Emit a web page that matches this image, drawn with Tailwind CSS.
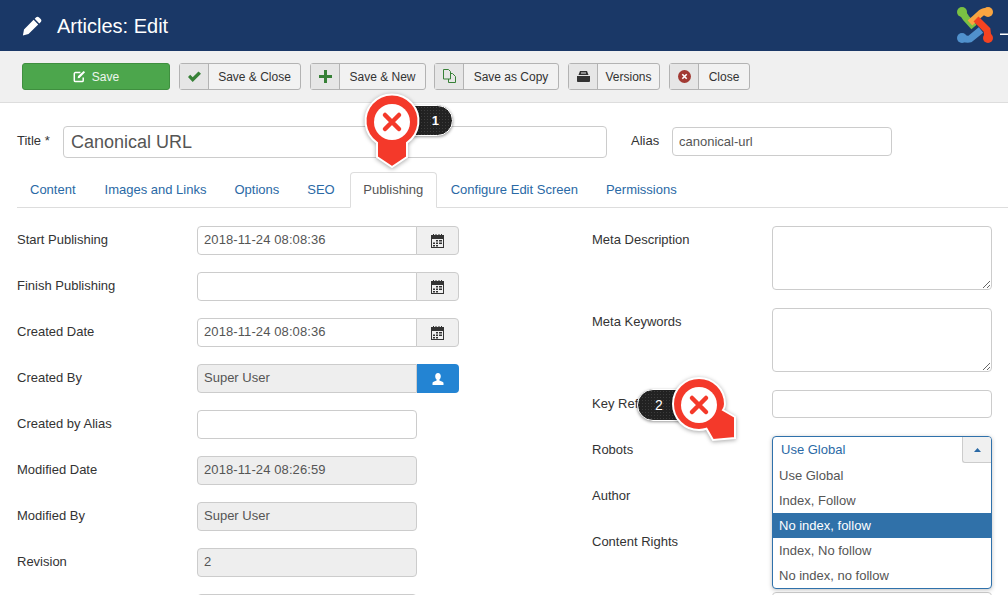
<!DOCTYPE html>
<html lang="en">
<head>
    <meta charset="UTF-8">
    <meta name="viewport" content="width=device-width, initial-scale=1.0">
    <title>Articles: Edit</title>
    <script src="https://cdn.jsdelivr.net/npm/@tailwindcss/browser@4"></script>
</head>
<body class="bg-white font-['Liberation_Sans',Arial,sans-serif] text-[13px] text-[#333]">
<div class="relative w-[1008px] h-[595px] overflow-hidden">

    <!-- header -->
    <header class="h-[51px] bg-[#1a3867] flex items-center pl-[22px] text-white">
        <svg class="w-5 h-5" viewBox="0 0 20 20" fill="#fff"><path d="M14.2 1.2 c.9-.8 2-.7 2.9.2l1.6 1.6c.9.9.9 2.1.1 2.9l-1.5 1.5-4.600-4.600zM11.600 3.800l4.600 4.600-9.700 9.700-5.600 1.400 1.100-5.900z"/></svg>
        <h1 class="ml-[15px] text-[20px] leading-none">Articles: Edit</h1>
        <svg class="ml-auto w-[51px] h-[51px] shrink-0" viewBox="0 0 51 51" fill="none" stroke-width="7">
            <path d="M5 12 L9 18 L17 27" stroke="#7ac143"/>
            <circle cx="5" cy="12" r="5" fill="#7ac143"/>
            <path d="M13 23 L23 14 C26 11 28 11 31 12" stroke="#f9a541"/>
            <circle cx="31" cy="12" r="5" fill="#f9a541"/>
            <path d="M19 19 L30 30 L31 38" stroke="#f44321"/>
            <circle cx="31" cy="38" r="5" fill="#f44321"/>
            <path d="M24 30 L13 39 C10 40 8 39 5 38" stroke="#5091cd"/>
            <circle cx="5" cy="38" r="5" fill="#5091cd"/>
            <rect x="43" y="33.500" width="8" height="1.500" fill="#fff" stroke="none"/>
        </svg>
    </header>

    <!-- toolbar -->
    <div class="h-[52px] bg-[#f0f0f0] border-b border-[#ddd] pl-[22px] flex items-center gap-[9px] text-[12px] pb-px">
        <button class="w-[148px] h-[27px] bg-[#4ca64c] border border-[#3f8f3f] rounded-[3px] text-white/90 flex items-center justify-center gap-[6px]">
            <svg class="w-[13px] h-[13px]" viewBox="0 0 14 14" fill="none" stroke="#fff" stroke-width="1.600"><path d="M11 8v3.200c0 .7-.5 1.200-1.200 1.200H2.600c-.7 0-1.200-.5-1.200-1.200V4c0-.7.500-1.200 1.200-1.200H8"/><path d="M5.500 6.500 L11.500 1 L13 2.500 L7 8.500 L5 9z" fill="#fff" stroke="none"/></svg>
            <span class="pt-[2px]">Save</span>
        </button>
        <button class="w-[122px] h-[27px] bg-[#f2f2f2] border border-[#b3b3b3] rounded-[3px] flex items-stretch text-[#333]">
            <span class="w-[29px] bg-[#e6e6e6] border-r border-[#b3b3b3] flex items-center justify-center">
                <svg class="w-[13px] h-[11px]" viewBox="0 0 13 11" fill="#378137"><path d="M0 6l2.200-2.200 2.500 2.500L10.500 .5 13 2.800 4.700 11z"/></svg>
            </span>
            <span class="flex-1 flex items-center justify-center pt-[2px]">Save &amp; Close</span>
        </button>
        <button class="w-[116px] h-[27px] bg-[#f2f2f2] border border-[#b3b3b3] rounded-[3px] flex items-stretch text-[#333]">
            <span class="w-[29px] bg-[#e6e6e6] border-r border-[#b3b3b3] flex items-center justify-center">
                <svg class="w-[13px] h-[13px]" viewBox="0 0 13 13" fill="#378137"><path d="M5 0h3v5h5v3H8v5H5V8H0V5h5z"/></svg>
            </span>
            <span class="flex-1 flex items-center justify-center pt-[2px]">Save &amp; New</span>
        </button>
        <button class="-ml-px w-[125px] h-[27px] bg-[#f2f2f2] border border-[#b3b3b3] rounded-[3px] flex items-stretch text-[#333]">
            <span class="w-[29px] bg-[#e6e6e6] border-r border-[#b3b3b3] flex items-center justify-center">
                <svg class="w-[13px] h-[14px]" viewBox="0 0 13 14" fill="none" stroke="#378137" stroke-width="1"><path d="M.5.500h5l2 2v7.500h-7zM7.500 4.500h2l3 3v6h-7V10"/></svg>
            </span>
            <span class="flex-1 flex items-center justify-center pt-[2px]">Save as Copy</span>
        </button>
        <button class="w-[92px] h-[27px] bg-[#f2f2f2] border border-[#b3b3b3] rounded-[3px] flex items-stretch text-[#333]">
            <span class="w-[29px] bg-[#e6e6e6] border-r border-[#b3b3b3] flex items-center justify-center">
                <svg class="w-[13px] h-[11px]" viewBox="0 0 13 11" fill="#333"><path d="M3 0h7l1.500 4H1.500zM0 5h13v5c0 .5-.4 1-1 1H1c-.6 0-1-.5-1-1z"/><rect x="4" y="1.500" width="5" height="1" fill="#e6e6e6"/></svg>
            </span>
            <span class="flex-1 flex items-center justify-center pt-[2px]">Versions</span>
        </button>
        <button class="w-[81px] h-[27px] bg-[#f2f2f2] border border-[#b3b3b3] rounded-[3px] flex items-stretch text-[#333]">
            <span class="w-[29px] bg-[#e6e6e6] border-r border-[#b3b3b3] flex items-center justify-center">
                <svg class="w-[13px] h-[13px]" viewBox="0 0 13 13"><circle cx="6.500" cy="6.500" r="6.500" fill="#a23a33"/><path d="M4.300 4.300l4.400 4.400M8.700 4.300l-4.400 4.400" stroke="#fff" stroke-width="1.600"/></svg>
            </span>
            <span class="flex-1 flex items-center justify-center pt-[2px]">Close</span>
        </button>
    </div>

    <!-- title row -->
    <div class="flex items-center pl-[17px] pt-[23px]">
        <label class="w-[46px] pb-[2px]">Title *</label>
        <input value="Canonical URL" class="w-[544px] h-[32px] border border-[#ccc] rounded-[4px] px-[7px] text-[18px] text-[#555]">
        <label class="ml-[24px] w-[41px] pb-[2px]">Alias</label>
        <input value="canonical-url" class="w-[220px] h-[29px] mb-[2px] border border-[#ccc] rounded-[4px] px-[6px] text-[13px] text-[#555]">
    </div>

    <!-- tabs -->
    <nav class="mt-[14px] ml-[17px] h-[36px] border-b border-[#ddd] flex text-[13px] text-[#2a69a5]">
        <a class="pl-[13px] pr-[15px] pt-[8px]">Content</a>
        <a class="pl-[14px] pr-[14px] pt-[8px]">Images and Links</a>
        <a class="pl-[14px] pr-[14px] pt-[8px]">Options</a>
        <a class="pl-[14px] pr-[14px] pt-[8px] mr-[1px]">SEO</a>
        <a class="w-[87px] h-[36px] bg-white border border-[#ddd] border-b-white rounded-t-[4px] text-center pt-[7px] text-[#555]">Publishing</a>
        <a class="px-[14px] pt-[8px]">Configure Edit Screen</a>
        <a class="px-[14px] pt-[8px]">Permissions</a>
    </nav>

    <!-- form -->
    <div class="flex pl-[17px] pt-[18px]">
        <div class="w-[575px] flex flex-col gap-[17px] shrink-0">
            <div class="flex items-center h-[29px]">
                <label class="w-[180px] pb-[2px]">Start Publishing</label>
                <input value="2018-11-24 08:08:36" class="w-[220px] h-[29px] border border-[#ccc] rounded-l-[4px] px-[6px] pb-[2px] text-[#555] tracking-[0.1px]">
                <span class="w-[43px] h-[29px] -ml-px bg-[#f0f0f0] border border-[#ccc] rounded-r-[4px] flex items-center justify-center">
                    <svg class="w-[13px] h-[14px]" viewBox="0 0 13 14" fill="#333"><path d="M0 1h13v13H0zM1 5v8h11V5z"/><path d="M2 0h1v2H2zM4.500 0h1v2h-1zM7.500 0h1v2h-1zM10 0h1v2h-1zM5 6h2v1.500H5zM8 6h3v1.500H8zM2 8.500h2V10H2zM5 8.500h2V10H5zM8 8.500h3V10H8zM5 11h2v1.500H5zM2 11h2v1.500H2z"/></svg>
                </span>
            </div>
            <div class="flex items-center h-[29px]">
                <label class="w-[180px] pb-[2px]">Finish Publishing</label>
                <input class="w-[220px] h-[29px] border border-[#ccc] rounded-l-[4px] px-[6px] text-[#555]">
                <span class="w-[43px] h-[29px] -ml-px bg-[#f0f0f0] border border-[#ccc] rounded-r-[4px] flex items-center justify-center">
                    <svg class="w-[13px] h-[14px]" viewBox="0 0 13 14" fill="#333"><path d="M0 1h13v13H0zM1 5v8h11V5z"/><path d="M2 0h1v2H2zM4.500 0h1v2h-1zM7.500 0h1v2h-1zM10 0h1v2h-1zM5 6h2v1.500H5zM8 6h3v1.500H8zM2 8.500h2V10H2zM5 8.500h2V10H5zM8 8.500h3V10H8zM5 11h2v1.500H5zM2 11h2v1.500H2z"/></svg>
                </span>
            </div>
            <div class="flex items-center h-[29px]">
                <label class="w-[180px] pb-[2px]">Created Date</label>
                <input value="2018-11-24 08:08:36" class="w-[220px] h-[29px] border border-[#ccc] rounded-l-[4px] px-[6px] pb-[2px] text-[#555] tracking-[0.1px]">
                <span class="w-[43px] h-[29px] -ml-px bg-[#f0f0f0] border border-[#ccc] rounded-r-[4px] flex items-center justify-center">
                    <svg class="w-[13px] h-[14px]" viewBox="0 0 13 14" fill="#333"><path d="M0 1h13v13H0zM1 5v8h11V5z"/><path d="M2 0h1v2H2zM4.500 0h1v2h-1zM7.500 0h1v2h-1zM10 0h1v2h-1zM5 6h2v1.500H5zM8 6h3v1.500H8zM2 8.500h2V10H2zM5 8.500h2V10H5zM8 8.500h3V10H8zM5 11h2v1.500H5zM2 11h2v1.500H2z"/></svg>
                </span>
            </div>
            <div class="flex items-center h-[29px]">
                <label class="w-[180px] pb-[2px]">Created By</label>
                <input value="Super User" disabled class="w-[220px] h-[29px] bg-[#eee] border border-[#ccc] rounded-l-[4px] px-[6px] pb-[2px] text-[#555]">
                <span class="w-[42px] h-[29px] bg-[#2384d3] rounded-r-[4px] flex items-center justify-center">
                    <svg class="w-[12px] h-[12px]" viewBox="0 0 12 12" fill="#fff"><path d="M6 0c1.800 0 2.800 1.300 2.800 3.200 0 1.400-.6 2.700-1.400 3.300v1c1.600.6 3.600 1.200 4.100 2.200V12H.5V9.700c.5-1 2.500-1.600 4.100-2.200v-1C3.800 5.900 3.200 4.600 3.200 3.200 3.200 1.300 4.200 0 6 0z"/></svg>
                </span>
            </div>
            <div class="flex items-center h-[29px]">
                <label class="w-[180px] pb-[2px]">Created by Alias</label>
                <input class="w-[220px] h-[29px] border border-[#ccc] rounded-[4px] px-[6px] text-[#555]">
            </div>
            <div class="flex items-center h-[29px]">
                <label class="w-[180px] pb-[2px]">Modified Date</label>
                <input value="2018-11-24 08:26:59" disabled class="w-[220px] h-[29px] bg-[#eee] border border-[#ccc] rounded-[4px] px-[6px] pb-[2px] text-[#555] tracking-[0.1px]">
            </div>
            <div class="flex items-center h-[29px]">
                <label class="w-[180px] pb-[2px]">Modified By</label>
                <input value="Super User" disabled class="w-[220px] h-[29px] bg-[#eee] border border-[#ccc] rounded-[4px] px-[6px] pb-[2px] text-[#555]">
            </div>
            <div class="flex items-center h-[29px]">
                <label class="w-[180px] pb-[2px]">Revision</label>
                <input value="2" disabled class="w-[220px] h-[29px] bg-[#eee] border border-[#ccc] rounded-[4px] px-[6px] pb-[2px] text-[#555]">
            </div>
            <div class="flex items-center h-[29px]">
                <label class="w-[180px]"></label>
                <input disabled class="w-[220px] h-[29px] bg-[#eee] border border-[#ccc] rounded-[4px]">
            </div>
        </div>

        <div class="w-[400px] shrink-0">
            <div class="flex h-[64px] mb-[18px]">
                <label class="w-[180px] pt-[4px]">Meta Description</label>
                <textarea class="w-[220px] h-[64px] border border-[#ccc] rounded-[4px]"></textarea>
            </div>
            <div class="flex h-[64px] mb-[18px]">
                <label class="w-[180px] pt-[4px]">Meta Keywords</label>
                <textarea class="w-[220px] h-[64px] border border-[#ccc] rounded-[4px]"></textarea>
            </div>
            <div class="flex items-center h-[28px] mb-[18px]">
                <label class="w-[180px]">Key Reference</label>
                <input class="w-[220px] h-[28px] border border-[#ccc] rounded-[4px]">
            </div>
            <div class="flex items-center h-[29px] mb-[17px]">
                <label class="w-[180px] pb-[2px]">Robots</label>
                <div class="relative w-[220px] h-[29px]">
                    <div class="absolute inset-x-0 top-0 h-[153px] z-10 bg-white border border-[#2f71ab] rounded-[4px] shadow-[0_1px_4px_rgba(0,0,0,0.25)] text-[#555] overflow-hidden">
                        <div class="h-[26px] flex items-center justify-between">
                            <span class="pl-[8px] text-[#2a69a5]">Use Global</span>
                            <span class="w-[29px] h-[26px] bg-[#f0f0f0] border-l border-b border-[#ccc] rounded-bl-[3px] flex items-center justify-center">
                                <svg class="w-[7px] h-[4px]" viewBox="0 0 7 4" fill="#2a69a5"><path d="M3.500 0L7 4H0z"/></svg>
                            </span>
                        </div>
                        <ul>
                            <li class="h-[25px] leading-[25px] pl-[6px]">Use Global</li>
                            <li class="h-[25px] leading-[25px] pl-[6px]">Index, Follow</li>
                            <li class="h-[25px] leading-[25px] pl-[6px] bg-[#3071a9] text-white">No index, follow</li>
                            <li class="h-[25px] leading-[25px] pl-[6px]">Index, No follow</li>
                            <li class="h-[25px] leading-[25px] pl-[6px]">No index, no follow</li>
                        </ul>
                    </div>
                </div>
            </div>
            <div class="flex items-center h-[29px] mb-[17px]">
                <label class="w-[180px] pb-[2px]">Author</label>
            </div>
            <div class="flex items-center h-[29px] mb-[35px]">
                <label class="w-[180px] pb-[2px]">Content Rights</label>
            </div>
            <div class="ml-[180px] w-[220px] h-[29px] border border-[#ccc] rounded-[4px]"></div>
        </div>
    </div>

    <!-- callout 1 -->
    <div class="absolute left-[404px] top-[105px] w-[49px] h-[31px] bg-[#222] bg-[radial-gradient(#3d3d3d_1px,transparent_1px)] bg-[length:3px_3px] border border-white rounded-r-[16px] shadow-[0_1px_3px_rgba(0,0,0,0.4)] text-white font-bold text-[13px] flex items-center justify-end pr-[13px]">1</div>
    <svg class="absolute left-[362px] top-[92px] w-[60px] h-[80px] drop-shadow-[0_1px_2px_rgba(0,0,0,0.35)]" viewBox="0 0 60 80">
        <path d="M15 50.800V65L30 75L45 65V50.800A26.500 26.500 0 1 0 15 50.800z" fill="#f4392a" stroke="#fff" stroke-width="2"/>
        <circle cx="30" cy="30" r="18" fill="#fff"/>
        <path d="M23 23l14 14M37 23L23 37" stroke="#f4392a" stroke-width="4.500" stroke-linecap="round"/>
    </svg>

    <!-- callout 2 -->
    <div class="absolute left-[637px] top-[389px] w-[50px] h-[32px] bg-[#222] bg-[radial-gradient(#3d3d3d_1px,transparent_1px)] bg-[length:3px_3px] border border-white rounded-l-[16px] shadow-[0_1px_3px_rgba(0,0,0,0.4)] text-white text-[14px] flex items-center pl-[17px]">2</div>
    <svg class="absolute left-[668px] top-[374px] w-[72px] h-[70px] drop-shadow-[0_1px_2px_rgba(0,0,0,0.35)]" viewBox="0 0 72 70">
        <path d="M31 4C16.500 4 5 15.500 5 30c0 14.500 11.500 26 26 26 2.500 0 5-.3 7.500-1.200L45 66l22-2V43L55 36c1.400-2 2-3.500 2-6C57 15.500 45.500 4 31 4z" fill="#f4392a" stroke="#fff" stroke-width="2"/>
        <circle cx="31" cy="31" r="18" fill="#fff"/>
        <path d="M24 24l14 14M38 24L24 38" stroke="#f4392a" stroke-width="4.500" stroke-linecap="round"/>
    </svg>
</div>
</body>
</html>
